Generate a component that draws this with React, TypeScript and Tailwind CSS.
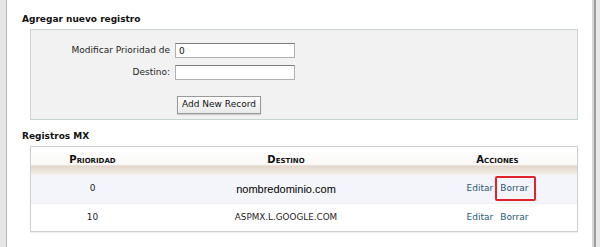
import React from "react";

const records = [
  { prio: "0", dest: "nombredominio.com", big: true, marked: true },
  { prio: "10", dest: "ASPMX.L.GOOGLE.COM", big: false, marked: false },
];

export default function App() {
  return (
    <div className="w-[600px] h-[247px] flex bg-white overflow-hidden font-['DejaVu_Sans',sans-serif] text-[#222]">
      {/* left frame */}
      <div className="w-[7px] shrink-0 bg-[#e6e6e6] border-r border-[#b4b4b4]" />

      <div className="flex-1 pl-[15px] pr-[14px]">
        <h2 className="mt-[13px] h-[12px] leading-[12px] text-[9px] font-bold text-[#111]">
          Agregar nuevo registro
        </h2>

        {/* form box */}
        <div className="ml-[8px] mt-[4px] h-[91px] border border-[#c9d3d2] bg-[#f2f2f2] pt-[13px]">
          <div className="flex items-center gap-[5px] h-[15px]">
            <label className="w-[139px] text-right text-[9px] text-[#1e1e1e]">Modificar Prioridad de</label>
            <input
              readOnly
              value="0"
              className="w-[120px] h-[15px] bg-white border border-[#b0b0b0] border-t-[#7c7c7c] px-[3px] text-[9px] text-[#111] outline-none"
            />
          </div>
          <div className="flex items-center gap-[5px] h-[15px] mt-[7px]">
            <label className="w-[139px] text-right text-[9px] text-[#1e1e1e]">Destino:</label>
            <input
              readOnly
              className="w-[120px] h-[15px] bg-white border border-[#b0b0b0] border-t-[#7c7c7c] px-[3px] text-[9px] outline-none"
            />
          </div>
          <div className="pl-[146px] mt-[10px]">
            <button className="w-[84px] h-[18px] border border-[#9a9a9a] bg-[linear-gradient(#ffffff,#e9e9e9)] text-[9px] text-[#111] shadow-[0_1px_1px_rgba(0,0,0,0.15)]">
              Add New Record
            </button>
          </div>
        </div>

        <h2 className="mt-[10px] h-[12px] leading-[12px] text-[9px] font-bold text-[#111]">Registros MX</h2>

        {/* table */}
        <div className="ml-[8px] mt-[4px] border border-[#cfcfcf] shadow-[0_1px_1px_rgba(0,0,0,0.06)]">
          <table className="w-full table-fixed border-collapse">
            <colgroup>
              <col className="w-[123px]" />
              <col className="w-[264px]" />
              <col />
            </colgroup>
            <thead>
              <tr className="h-[28px] bg-[linear-gradient(#ffffff_0%,#fbfaf8_62%,#e2d6ca_68%,#ebe3da_84%,#f3efea_100%)]">
                {["Prioridad", "Destino", "Acciones"].map((h) => (
                  <th
                    key={h}
                    className="text-center text-[10px] font-bold text-[#111] [font-variant:small-caps] pb-[4px]"
                  >
                    {h}
                  </th>
                ))}
              </tr>
            </thead>
            <tbody>
              {records.map((r, i) => (
                <tr key={i} className={`h-[28px] ${i === 0 ? "bg-[#f4f5fb]" : "bg-white border-t border-[#f0f0f0]"}`}>
                  <td className="text-center text-[9px] text-[#1e1e1e]">{r.prio}</td>
                  <td
                    className={
                      r.big
                        ? "text-center text-[11px] text-black font-['Liberation_Sans',sans-serif]"
                        : "text-center text-[8.8px] text-[#1e1e1e]"
                    }
                  >
                    {r.dest}
                  </td>
                  <td className="text-center text-[9px] text-[#285874]">
                    <span>Editar</span>
                    <span className="relative ml-[7px]">
                      Borrar
                      {r.marked && (
                        <span className="absolute left-[-5px] top-[-7px] w-[41px] h-[25px] border-2 border-[#e0242a] rounded-[2px]" />
                      )}
                    </span>
                  </td>
                </tr>
              ))}
            </tbody>
          </table>
        </div>
      </div>

      {/* right frame */}
      <div className="w-[8px] shrink-0 flex">
        <div className="w-[2px] bg-[#d6d6d6]" />
        <div className="w-[2px] bg-[#9c9c9c]" />
        <div className="flex-1 bg-[#e8e8e8]" />
      </div>
    </div>
  );
}
